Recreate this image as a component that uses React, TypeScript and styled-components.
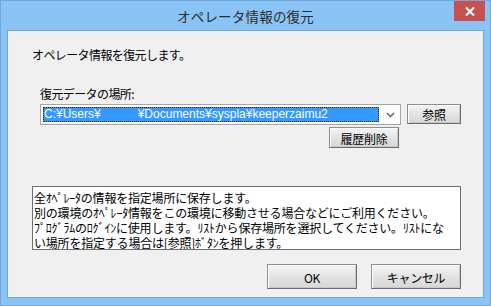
import React from "react";
import styled, { createGlobalStyle } from "styled-components";

const GlobalStyle = createGlobalStyle`
  html, body {
    margin: 0;
    padding: 0;
    background: #8ac4f5;
  }
  * { box-sizing: border-box; }
`;

const uiFont = `"Noto Sans CJK JP", "Liberation Sans", sans-serif`;

const Window = styled.div`
  width: 491px;
  height: 306px;
  background: #8ac4f5;
  border: 1px solid #6ea8dc;
  display: flex;
  flex-flow: column;
  font-family: ${uiFont};
  font-size: 12px;
  color: #000;
`;

const TitleBar = styled.div`
  height: 29px;
  display: grid;
  grid-template-columns: 1fr auto 1fr;
  align-items: start;
`;

const Title = styled.div`
  grid-column: 2;
  font-size: 13.5px;
  line-height: 15px;
  margin-top: 8px;
  color: #2b2b2b;
  letter-spacing: 0.2px;
`;

const CloseButton = styled.div`
  grid-column: 3;
  justify-self: end;
  width: 31px;
  height: 20px;
  margin-right: 5px;
  background: #c75050;
  display: flex;
  align-items: center;
  justify-content: center;
`;

const Client = styled.div`
  flex: 1;
  margin: 0 6px 7px 6px;
  background: #f0f0f0;
  border: 1px solid #6ea8dc;
  padding: 16px 22px 0 24px;
  display: flex;
  flex-flow: column;
`;

const Line = styled.div<{ $indent?: number; $top?: number }>`
  line-height: 15px;
  height: 15px;
  margin-left: ${(p) => p.$indent || 0}px;
  margin-top: ${(p) => p.$top || 0}px;
  white-space: nowrap;
  letter-spacing: -0.6px;
`;

const PathRow = styled.div`
  display: flex;
  margin: 3px 0 0 8px;
  gap: 6px;
  align-items: flex-start;
`;

const Combo = styled.div`
  width: 361px;
  height: 21px;
  background: #fff;
  border: 1px solid #a5a5a5;
  display: flex;
  align-items: center;
  padding: 0 0 0 2px;
`;

const Selection = styled.div`
  flex: 1;
  height: 15px;
  background: #3399ff;
  border: 1px dotted #3a1a1a;
  color: #fff;
  font-family: "Liberation Sans", sans-serif;
  font-size: 12px;
  line-height: 13px;
  display: flex;
  white-space: nowrap;
`;

const Masked = styled.span`
  display: inline-block;
  width: 37px;
`;

const Arrow = styled.div`
  width: 21px;
  display: flex;
  justify-content: center;
  padding: 1px 0 0 2px;
`;

const Button = styled.div<{ $w: number; $h: number }>`
  width: ${(p) => p.$w}px;
  height: ${(p) => p.$h}px;
  border: 1px solid #8e8e8e;
  border-right-color: #6b6b6b;
  border-bottom-color: #6b6b6b;
  box-shadow: inset 1px 1px 0 #fdfdfd, inset -1px -1px 0 #c9c9c9;
  background: linear-gradient(#f4f4f4, #e2e2e2 55%, #d7d7d7);
  display: flex;
  align-items: center;
  justify-content: center;
  font-size: 12px;
  letter-spacing: -0.3px;
  padding-top: 1px;
`;

const ClearRow = styled.div`
  display: flex;
  justify-content: flex-end;
  margin-top: 2px;
  padding-right: 62px;
`;

const MessageBox = styled.div`
  margin-top: 38px;
  height: 64px;
  background: #fff;
  border: 1px solid #6e6e6e;
  padding: 3px 0 0 1px;
  font-size: 12px;
  line-height: 15px;
  white-space: pre;
  letter-spacing: -0.2px;
  overflow: hidden;
`;

const Footer = styled.div`
  display: flex;
  justify-content: flex-end;
  gap: 14px;
  margin-top: 14px;
`;

const messageLines = [
  "全ｵﾍﾟﾚｰﾀの情報を指定場所に保存します。",
  "別の環境のｵﾍﾟﾚｰﾀ情報をこの環境に移動させる場合などにご利用ください。",
  "ﾌﾟﾛｸﾞﾗﾑのﾛｸﾞｲﾝに使用します。ﾘｽﾄから保存場所を選択してください。ﾘｽﾄにな",
  "い場所を指定する場合は[参照]ﾎﾞﾀﾝを押します。",
];

export default function App() {
  return (
    <>
      <GlobalStyle />
      <Window>
        <TitleBar>
          <Title>オペレータ情報の復元</Title>
          <CloseButton>
            <svg width="10" height="9" viewBox="0 0 10 9">
              <path d="M1 0.5 L9 8.5 M9 0.5 L1 8.5" stroke="#fff" strokeWidth="2" />
            </svg>
          </CloseButton>
        </TitleBar>
        <Client>
          <Line>オペレータ情報を復元します。</Line>
          <Line $indent={8} $top={24}>復元データの場所:</Line>
          <PathRow>
            <Combo>
              <Selection>
                C:¥Users¥<Masked />¥Documents¥syspla¥keeperzaimu2
              </Selection>
              <Arrow>
                <svg width="9" height="6" viewBox="0 0 9 6">
                  <path d="M1 1 L4.5 4.5 L8 1" stroke="#6d6d6d" strokeWidth="1.6" fill="none" />
                </svg>
              </Arrow>
            </Combo>
            <Button $w={54} $h={20}>参照</Button>
          </PathRow>
          <ClearRow>
            <Button $w={70} $h={21}>履歴削除</Button>
          </ClearRow>
          <MessageBox>{messageLines.join("\n")}</MessageBox>
          <Footer>
            <Button $w={90} $h={25}>OK</Button>
            <Button $w={90} $h={25}>キャンセル</Button>
          </Footer>
        </Client>
      </Window>
    </>
  );
}
